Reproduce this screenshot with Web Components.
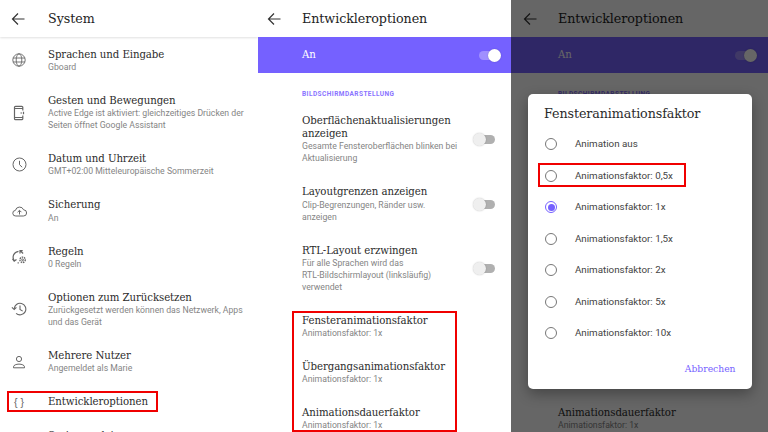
<!DOCTYPE html>
<html lang="de"><head><meta charset="utf-8"><title>System</title>
<style>
html,body{margin:0;padding:0;width:768px;height:432px;overflow:hidden;background:#fff}
body{display:flex;font-family:"Roboto","Open Sans",sans-serif}
</style></head><body>
<template id="t-screen"><style>
:host{display:block;position:relative;height:432px;overflow:hidden;background:#fff;flex:none;width:var(--w,256px)}
.in{margin-left:var(--o,0);width:var(--iw,256px);height:432px;display:flex;flex-direction:column}
</style><div class="in"><slot></slot></div></template>

<template id="t-bar"><style>
:host{display:flex;align-items:center;height:37px;box-sizing:border-box;padding-left:var(--bl,10.500px);background:#fff;flex:none;position:relative;z-index:1}
:host([shadow]){box-shadow:0 1px 2px rgba(0,0,0,.12)}
.t{font:400 12.700px/20px "DejaVu Serif",serif;color:#242424;margin-left:var(--tl,19.500px);flex:1;letter-spacing:-.06px}
.a{display:flex;align-items:center;gap:14px;padding-right:var(--ar,7.500px)}
svg{display:block;width:16px;height:16px}
</style><svg viewBox="0 0 16 16" fill="none" stroke="#333" stroke-width="1.200"><path d="M13.500 8H1.500M7 2.500 1.500 8l5.500 5.500"/></svg><div class="t"><slot></slot></div><div class="a"><slot name="a"></slot></div></template>

<template id="t-row"><style>
:host{display:flex;box-sizing:border-box;padding:10.470px var(--rr,17.300px) 10.470px var(--rl,11px);align-items:center;flex:none}
.i{width:16px;height:0;flex:none;margin-right:21px;color:#666;display:flex;align-items:center;justify-content:center}
:host([noicon]) .i{display:none}
.b{flex:1;min-width:0}
.t{font:400 10.200px/13.250px "DejaVu Serif",serif;color:#2c2c2c;letter-spacing:-.08px;white-space:nowrap}
.s{font:400 8.700px/12px "Roboto","Open Sans",sans-serif;color:#858585;white-space:nowrap}
</style><div class="i"><slot name="i"></slot></div><div class="b"><div class="t"><slot name="t"></slot></div><div class="s"><slot name="s"></slot></div></div><slot name="e"></slot></template>

<template id="t-toggle"><style>
:host{display:block;width:21.500px;height:13px;position:relative;flex:none}
.tr{position:absolute;left:3px;right:0;top:2px;height:9px;border-radius:5px;background:#b0b0b0}
.th{position:absolute;left:0;top:0;width:13px;height:13px;border-radius:50%;background:#efefef;box-shadow:0 0 1.500px rgba(0,0,0,.25)}
:host([on]) .tr{background:#a08fff;left:0;right:3px}
:host([on]) .th{left:auto;right:0;background:#fff}
</style><div class="tr"></div><div class="th"></div></template>

<template id="t-radio"><style>
:host{display:flex;align-items:center;height:31.500px;padding-left:17px;font:400 9.800px/14px "Roboto","Open Sans",sans-serif;color:#444}
.r{width:10.400px;height:10.400px;border:1.200px solid #777;border-radius:50%;margin-right:17.500px;flex:none;position:relative}
:host([on]) .r{border-color:#7561ff}
:host([on]) .r::after{content:"";position:absolute;inset:1.700px;border-radius:50%;background:#7561ff}
</style><div class="r"></div><slot></slot></template>

<template id="t-mark"><style>
:host{display:block;position:absolute;border:2px solid #f00000;box-sizing:border-box;pointer-events:none;z-index:5}
</style></template>

<template id="t-dialog"><style>
:host{display:block;position:absolute;left:17.500px;top:93.500px;width:223.500px;height:295px;box-sizing:border-box;background:#fff;border-radius:5px;box-shadow:0 5px 14px rgba(0,0,0,.32);z-index:3;padding-top:10px}
.h{font:400 12.700px/20px "DejaVu Serif",serif;color:#2b2b2b;padding-left:16px;letter-spacing:-.1px;margin-bottom:5px}
.f{text-align:right;padding:13px 16px 0 0;font:400 9.200px/14px "DejaVu Serif",serif;color:#7561ff}
</style><div class="h"><slot name="h"></slot></div><slot></slot><div class="f"><slot name="f"></slot></div></template>

<template id="t-scrim"><style>:host{display:block;position:absolute;inset:0;background:rgba(0,0,0,.6);z-index:2}</style></template>

<template id="t-band"><style>
:host{display:flex;align-items:center;height:36px;background:#7561ff;margin:0 -4px;padding:0 15.500px 0 50px;flex:none;justify-content:space-between;color:#fff;font:400 10.200px/14px "DejaVu Serif",serif}
</style><slot></slot><slot name="e"></slot></template>

<template id="t-cap"><style>:host{display:block;flex:none;padding:15.500px 0 5px 46px;font:700 6.500px/10px "Roboto",sans-serif;letter-spacing:.45px;color:#8a73ff;white-space:nowrap}</style><slot></slot></template>

<template id="t-dev"><style>:host{display:block}
ui-row{--rl:46px}
:host([covered]) .u{visibility:hidden}</style>
<ui-row class="u" noicon><span slot="t">Oberflächenaktualisierungen<br>anzeigen</span><span slot="s">Gesamte Fensteroberflächen blinken bei<br>Aktualisierung</span><ui-toggle slot="e"></ui-toggle></ui-row>
<ui-row class="u" noicon><span slot="t">Layoutgrenzen anzeigen</span><span slot="s">Clip-Begrenzungen, Ränder usw.<br>anzeigen</span><ui-toggle slot="e"></ui-toggle></ui-row>
<ui-row class="u" noicon><span slot="t">RTL-Layout erzwingen</span><span slot="s">Für alle Sprachen wird das<br>RTL-Bildschirmlayout (linksläufig)<br>verwendet</span><ui-toggle slot="e"></ui-toggle></ui-row>
<ui-row class="u" noicon><span slot="t">Fensteranimationsfaktor</span><span slot="s">Animationsfaktor: 1x</span></ui-row>
<ui-row class="u" noicon><span slot="t">Übergangsanimationsfaktor</span><span slot="s">Animationsfaktor: 1x</span></ui-row>
<ui-row noicon><span slot="t">Animationsdauerfaktor</span><span slot="s">Animationsfaktor: 1x</span></ui-row>
</template>

<script>
for(const [n,t] of [["ui-screen","t-screen"],["ui-bar","t-bar"],["ui-row","t-row"],["ui-toggle","t-toggle"],["ui-radio","t-radio"],["ui-mark","t-mark"],["ui-dialog","t-dialog"],["ui-scrim","t-scrim"],["ui-band","t-band"],["ui-cap","t-cap"],["ui-dev","t-dev"]]){
  customElements.define(n,class extends HTMLElement{constructor(){super();this.attachShadow({mode:"open"}).appendChild(document.getElementById(t).content.cloneNode(true))}});
}
</script>

<svg width="0" height="0" style="position:absolute"><defs>
<symbol id="search" viewBox="0 0 16 16"><circle cx="6.800" cy="6.800" r="4.400" fill="none" stroke="#333" stroke-width="1.200"/><path d="M10 10 14 14" stroke="#333" stroke-width="1.300" fill="none"/></symbol>
</defs></svg>

<ui-screen style="--w:258px;--iw:258px">
<ui-bar shadow style="--bl:11px;--tl:21px;--ar:7px">System
  <svg slot="a" viewBox="0 0 16 16"><use href="#search"/></svg>
  <svg slot="a" viewBox="0 0 16 16" fill="none" stroke="#333"><circle cx="8" cy="8" r="6.600" stroke-width="1.100"/><path d="M5.900 6.400a2.100 2.100 0 1 1 3.300 1.700C8.400 8.700 8 9 8 10M8 11v1.300" stroke-width="1.100"/></svg>
</ui-bar>
<ui-row style="margin-top:.4px">
  <svg slot="i" width="14" height="14" viewBox="0 0 14 14" fill="none" stroke="#666" stroke-width=".9" style="flex:none"><circle cx="7" cy="7" r="6.200"/><ellipse cx="7" cy="7" rx="2.800" ry="6.200"/><path d="M1 5h12M1 9h12"/></svg>
  <span slot="t">Sprachen und Eingabe</span><span slot="s">Gboard</span></ui-row>
<ui-row>
  <svg slot="i" width="16" height="16" viewBox="0 0 16 16" fill="none" stroke="#666" stroke-width="1.200" style="flex:none"><path d="M11.800 5.500V2.300a1 1 0 0 0-1-1H4.500a1 1 0 0 0-1 1v11.400a1 1 0 0 0 1 1h6.300a1 1 0 0 0 1-1v-3.200M3.500 3.500h8.300M3.500 12.500h8.300"/><path d="M9.500 8H11M12.500 6.800v2.400"/></svg>
  <span slot="t">Gesten und Bewegungen</span><span slot="s">Active Edge ist aktiviert: gleichzeitiges Drücken der<br>Seiten öffnet Google Assistant</span></ui-row>
<ui-row>
  <svg slot="i" width="15" height="15" viewBox="0 0 15 15" fill="none" stroke="#666" stroke-width="1" style="flex:none"><circle cx="7.500" cy="7.500" r="6.500"/><path d="M7.500 3.800v3.900l2.700 2.500"/></svg>
  <span slot="t">Datum und Uhrzeit</span><span slot="s">GMT+02:00 Mitteleuropäische Sommerzeit</span></ui-row>
<ui-row>
  <svg slot="i" width="15" height="15" viewBox="0 0 15 15" fill="none" stroke="#666" stroke-width="1" style="flex:none"><path d="M3.800 12a2.800 2.800 0 0 1-.4-5.600 4.300 4.300 0 0 1 8.200-.6 3.100 3.100 0 0 1-.2 6.200z"/><path d="M7.500 10.500V6.500M5.600 8.200l1.900-1.900 1.900 1.900"/></svg>
  <span slot="t">Sicherung</span><span slot="s">An</span></ui-row>
<ui-row>
  <svg slot="i" width="16" height="16" viewBox="0 0 16 16" fill="none" stroke="#666" stroke-width="1.200" style="flex:none"><path d="M7.500 2.300A6 6 0 0 0 3.300 11.800M7.800 13.900H6.600"/><path d="M1.500 9.800l1.700 2.300 2.300-1.600"/><path d="M9.300 1.800l2.800 2.700M9 4.500V1.700h2.700"/><circle cx="11.600" cy="10.800" r=".9" stroke-width="1"/><circle cx="11.600" cy="10.800" r="2.700" stroke-width="1.400" stroke-dasharray="1.500 .8"/></svg>
  <span slot="t">Regeln</span><span slot="s">0 Regeln</span></ui-row>
<ui-row>
  <svg slot="i" width="16" height="16" viewBox="0 0 16 16" fill="none" stroke="#666" stroke-width="1.100" style="flex:none"><path d="M3.200 8a5.800 5.800 0 1 1 1.900 4.400"/><path d="M.9 6.300 3.200 8.500l2.200-2.200"/><path d="M9 4.500v4l2.700 1.600"/></svg>
  <span slot="t">Optionen zum Zurücksetzen</span><span slot="s">Zurückgesetzt werden können das Netzwerk, Apps<br>und das Gerät</span></ui-row>
<ui-row>
  <svg slot="i" width="14" height="14" viewBox="0 0 14 14" fill="none" stroke="#666" stroke-width="1" style="flex:none"><circle cx="7" cy="4" r="2.600"/><path d="M1.500 12.800v-1c0-1.600 2.700-2.700 5.500-2.700s5.500 1.100 5.500 2.700v1z"/></svg>
  <span slot="t">Mehrere Nutzer</span><span slot="s">Angemeldet als Marie</span></ui-row>
<ui-row>
  <span slot="i" style="font:400 10.500px/16px 'Liberation Sans',sans-serif;color:#666;white-space:nowrap;flex:none">{ }</span>
  <span slot="t">Entwickleroptionen</span></ui-row>
<ui-row>
  <span slot="t">Systemupdate</span></ui-row>
<ui-mark style="left:7px;top:391px;width:150.500px;height:21px"></ui-mark>
</ui-screen>

<ui-screen style="--w:252.500px;--o:-2px">
<ui-bar>Entwickleroptionen<svg slot="a" viewBox="0 0 16 16"><use href="#search"/></svg></ui-bar>
<ui-band>An<ui-toggle slot="e" on></ui-toggle></ui-band>
<ui-cap>BILDSCHIRMDARSTELLUNG</ui-cap>
<ui-dev></ui-dev>
<ui-mark style="left:34px;top:311px;width:165px;height:121px"></ui-mark>
</ui-screen>

<ui-screen style="--w:257.500px;--o:1.500px">
<ui-bar>Entwickleroptionen<svg slot="a" viewBox="0 0 16 16"><use href="#search"/></svg></ui-bar>
<ui-band>An<ui-toggle slot="e" on></ui-toggle></ui-band>
<ui-cap>BILDSCHIRMDARSTELLUNG</ui-cap>
<ui-dev covered></ui-dev>
<ui-scrim></ui-scrim>
<ui-dialog>
  <span slot="h">Fensteranimationsfaktor</span>
  <ui-radio>Animation aus</ui-radio>
  <ui-radio>Animationsfaktor: 0,5x</ui-radio>
  <ui-radio on>Animationsfaktor: 1x</ui-radio>
  <ui-radio>Animationsfaktor: 1,5x</ui-radio>
  <ui-radio>Animationsfaktor: 2x</ui-radio>
  <ui-radio>Animationsfaktor: 5x</ui-radio>
  <ui-radio>Animationsfaktor: 10x</ui-radio>
  <span slot="f">Abbrechen</span>
  <ui-mark style="left:10px;top:69px;width:147.500px;height:24px"></ui-mark>
</ui-dialog>
</ui-screen>
</body></html>
